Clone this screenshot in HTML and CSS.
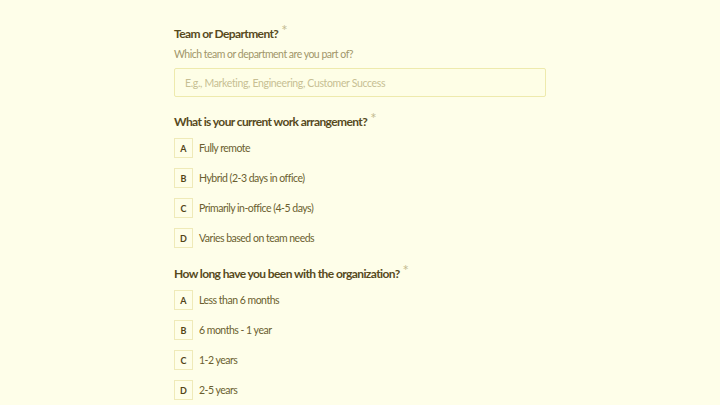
FILE: index.html
```html
<!DOCTYPE html>
<html>
<head>
<meta charset="utf-8">
<link rel="stylesheet" href="styles.css">
</head>
<body>
<main class="form">
  <section class="question">
    <h2 class="q-title">Team or Department?<span class="req">*</span></h2>
    <p class="q-desc">Which team or department are you part of?</p>
    <input class="text-input" type="text" placeholder="E.g., Marketing, Engineering, Customer Success">
  </section>
  <section class="question">
    <h2 class="q-title">What is your current work arrangement?<span class="req">*</span></h2>
    <ul class="options">
      <li class="option"><span class="key">A</span><span class="label">Fully remote</span></li>
      <li class="option"><span class="key">B</span><span class="label">Hybrid (2-3 days in office)</span></li>
      <li class="option"><span class="key">C</span><span class="label">Primarily in-office (4-5 days)</span></li>
      <li class="option"><span class="key">D</span><span class="label">Varies based on team needs</span></li>
    </ul>
  </section>
  <section class="question">
    <h2 class="q-title">How long have you been with the organization?<span class="req">*</span></h2>
    <ul class="options">
      <li class="option"><span class="key">A</span><span class="label">Less than 6 months</span></li>
      <li class="option"><span class="key">B</span><span class="label">6 months - 1 year</span></li>
      <li class="option"><span class="key">C</span><span class="label">1-2 years</span></li>
      <li class="option"><span class="key">D</span><span class="label">2-5 years</span></li>
    </ul>
  </section>
</main>
</body>
</html>
```
FILE: styles.css
```css
html, body {
  margin: 0;
  padding: 0;
  background: #fefee9;
}
body {
  font-family: "Lato", "Open Sans", sans-serif;
  color: #5e5223;
}
.form {
  width: 372px;
  margin: 0 0 0 174px;
  padding-top: 25px;
  display: flex;
  flex-direction: column;
  gap: 16px;
}
.question {
  display: flex;
  flex-direction: column;
}
.q-title {
  margin: 0;
  font-size: 12px;
  font-weight: 700;
  line-height: 18px;
  color: #574a1d;
  letter-spacing: -0.6px;
}
.req {
  display: inline-block;
  font-size: 15px;
  line-height: 11px;
  color: #c4bb90;
  font-weight: 400;
  vertical-align: top;
  margin-left: 3px;
  position: relative;
  top: 0;
}
.q-desc {
  margin: 4px 0 0 0;
  font-size: 10.5px;
  line-height: 14px;
  color: #a19669;
  letter-spacing: -0.5px;
}
.text-input {
  margin-top: 7px;
  box-sizing: border-box;
  width: 372px;
  height: 29px;
  border: 1px solid #eeeaad;
  background: #fefee6;
  border-radius: 2px;
  padding: 0 10px;
  font-family: inherit;
  font-size: 10.5px;
  letter-spacing: -0.35px;
  color: #5e5223;
  outline: none;
}
.text-input::placeholder {
  color: #c7bf93;
}
.options {
  list-style: none;
  margin: 7px 0 0 0;
  padding: 0 0 1px 0;
  display: flex;
  flex-direction: column;
  gap: 10px;
}
.option {
  display: flex;
  align-items: center;
  gap: 6px;
  height: 20px;
}
.key {
  box-sizing: border-box;
  width: 19px;
  height: 20px;
  border: 1px solid #efeab8;
  background: #fefee8;
  display: flex;
  align-items: center;
  justify-content: center;
  font-size: 9px;
  font-weight: 700;
  color: #524417;
}
.label {
  font-size: 10.5px;
  letter-spacing: -0.5px;
  color: #6b5e2f;
}
```
